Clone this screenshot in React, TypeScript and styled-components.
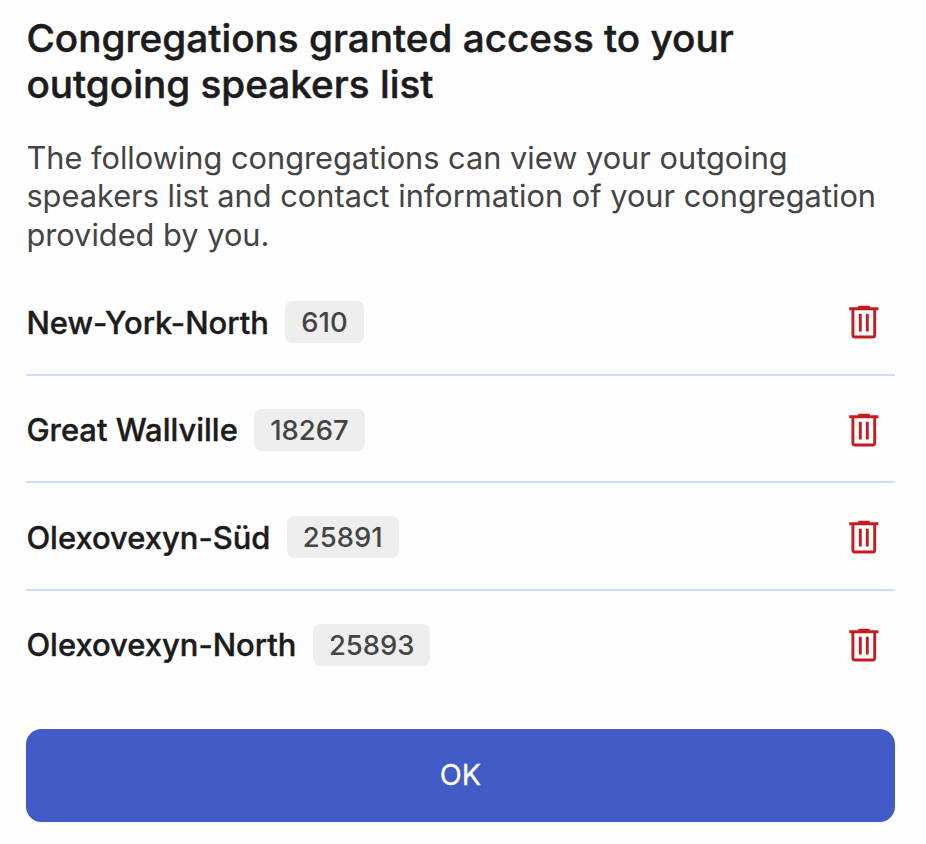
import React from "react";
import styled, { createGlobalStyle } from "styled-components";

const GlobalStyle = createGlobalStyle`
  *, *::before, *::after { box-sizing: border-box; }
  body { margin: 0; background: #fefefe; font-family: Inter, sans-serif; }
`;

const Dialog = styled.main`
  width: 926px;
  height: 844px;
  padding: 14px 31.4px 22.5px 26.4px;
  display: flex;
  flex-direction: column;
  background: #fefefe;
  overflow: hidden;
`;

const Title = styled.h1`
  margin: 0;
  padding-top: 0.5px;
  font-size: 38.7px;
  line-height: 46px;
  font-weight: 500;
  -webkit-text-stroke: 0.5px #1c1c1c;
  color: #1c1c1c;
  white-space: nowrap;
`;

const Description = styled.p`
  margin: 32px 0 0;
  font-size: 30.75px;
  line-height: 38.5px;
  font-weight: 400;
  color: #444444;
  white-space: nowrap;
`;

const List = styled.ul`
  list-style: none;
  margin: 14px 0 0;
  padding: 0;
`;

const Row = styled.li`
  height: 107.5px;
  display: flex;
  align-items: center;
  padding: 3px 14.8px 0 0;
  border-bottom: 2px solid #d0dcff;
  &:last-child { border-bottom-color: transparent; }
`;

const Name = styled.span`
  padding-top: 1px;
  font-size: 30.95px;
  line-height: 38px;
  font-weight: 500;
  -webkit-text-stroke: 0.4px #1c1c1c;
  color: #1c1c1c;
  white-space: nowrap;
`;

const Badge = styled.span`
  margin-left: 16.4px;
  height: 42px;
  padding: 0 16px;
  border-radius: 7.5px;
  background: #eeeeee;
  color: #444444;
  font-size: 27.4px;
  font-weight: 500;
  line-height: 42.6px;
`;

const DeleteButton = styled.button`
  margin-left: auto;
  padding: 0;
  border: 0;
  background: none;
  display: flex;
`;

const OkButton = styled.button`
  margin-top: auto;
  height: 92.5px;
  flex: none;
  padding: 0 0 2px;
  border: 0;
  border-radius: 15.5px;
  background: #415cc6;
  color: #fefefe;
  font: 400 28.8px Inter, sans-serif;
  -webkit-text-stroke: 0.3px #fefefe;
`;

const congregations = [
  { name: "New-York-North", number: "610" },
  { name: "Great Wallville", number: "18267" },
  { name: "Olexovexyn-Süd", number: "25891" },
  { name: "Olexovexyn-North", number: "25893" },
];

const TrashIcon = () => (
  <svg width="32" height="36" viewBox="0 0 32 36" fill="none" stroke="#c41c20" strokeWidth="2.9">
    <path d="M1.2 4.7h29.2M10.2 3.2h11.6M4.9 5v25.9q0 2.1 2.1 2.1h17.6q2.1 0 2.1-2.1V5M12.3 9.8v17.8M19.3 9.8v17.8" />
  </svg>
);

export default function App() {
  return (
    <>
      <GlobalStyle />
      <Dialog>
        <Title>Congregations granted access to your<br />outgoing speakers list</Title>
        <Description>
          The following congregations can view your outgoing<br />
          speakers list and contact information of your congregation<br />
          provided by you.
        </Description>
        <List>
          {congregations.map(({ name, number }) => (
            <Row key={number}>
              <Name>{name}</Name>
              <Badge>{number}</Badge>
              <DeleteButton aria-label={`Remove ${name}`}><TrashIcon /></DeleteButton>
            </Row>
          ))}
        </List>
        <OkButton>OK</OkButton>
      </Dialog>
    </>
  );
}
